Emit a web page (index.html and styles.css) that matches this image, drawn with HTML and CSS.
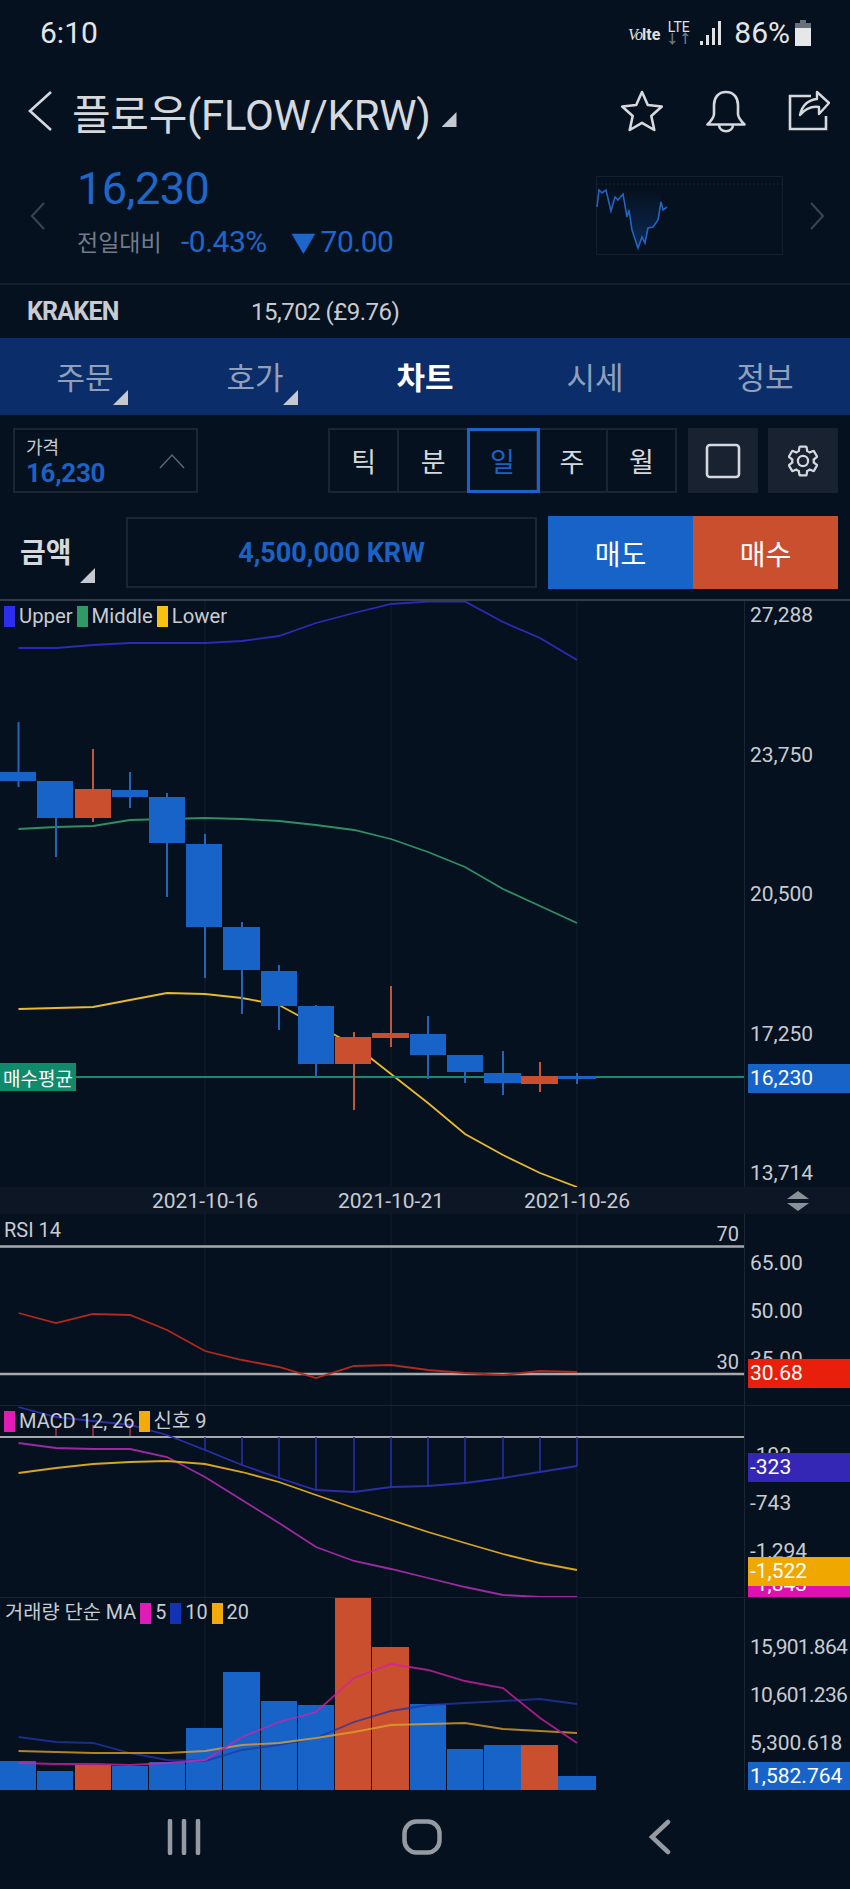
FILE: index.html
```html
<!DOCTYPE html>
<html>
<head>
  <meta charset="utf-8">
  <title>FLOW/KRW</title>
  <link rel="stylesheet" href="styles.css">
</head>
<body>
<div class="screen">

  <div class="status">
    <span class="clock">6:10</span>
    <div class="status-right">
      <span class="volte"><i>Vo</i><b>lte</b></span>
      <span class="lte"><span>LTE</span><small>↓↑</small></span>
      <svg class="signal" width="23" height="24" viewBox="0 0 23 24"><path d="M1 20h3v4H1zM7 14h3v10H7zM13 7h3v17h-3zM19 0h3v24h-3z" fill="#dfe1e4"/></svg>
      <span class="battery-text">86%</span>
      <svg width="18" height="26" viewBox="0 0 18 26"><path d="M6 0h6v3H6zM1 3h16v5H1z" fill="#6a7079"/><path d="M1 8h16v18H1z" fill="#e6e7e9"/></svg>
    </div>
  </div>

  <div class="header">
    <svg class="back" width="26" height="42" viewBox="0 0 26 42"><path d="M24 2 3 21l21 19" fill="none" stroke="#d5d8dc" stroke-width="2.6"/></svg>
    <h1 class="title">플로우(FLOW/KRW)</h1>
    <span class="corner title-corner"></span>
    <div class="header-icons">
      <svg width="44" height="44" viewBox="0 0 44 44"><path d="M22 3l5.8 13 14 1.500-10.500 9.500 3 14L22 33.800 9.700 41l3-14L2.200 17.500l14-1.500z" fill="none" stroke="#d5d8dc" stroke-width="2.600" stroke-linejoin="round"/></svg>
      <svg width="42" height="44" viewBox="0 0 42 44"><path d="M21 3C13 3 9 9 9 16v9c0 4-3 7-6.500 10.500h37C36 32 33 29 33 25v-9C33 9 29 3 21 3zM14 35.500c0 9 14 9 14 0" fill="none" stroke="#d5d8dc" stroke-width="2.600" stroke-linejoin="round"/></svg>
      <svg width="42" height="42" viewBox="0 0 42 42"><path d="M23 6H2v33h36V26" fill="none" stroke="#d5d8dc" stroke-width="2.600"/><path d="M12 25C14 16 20 10 29 9V2l12 11-10 11v-7c-7-1-14 2-19 8z" fill="none" stroke="#d5d8dc" stroke-width="2.400" stroke-linejoin="round"/></svg>
    </div>
  </div>

  <div class="quote">
    <svg class="quote-arrow" width="18" height="30" viewBox="0 0 18 30"><path d="M15 2 3 15l12 13" fill="none" stroke="#3b4552" stroke-width="2"/></svg>
    <div class="quote-main">
      <div class="price">16,230</div>
      <div class="change">
        <span class="change-label">전일대비</span>
        <span class="change-pct">-0.43%</span>
        <span class="change-val"><span class="down">▼</span>70.00</span>
      </div>
    </div>
    <svg class="mini" width="188" height="80" viewBox="596 175 188 80">
      <defs>
        <linearGradient id="miniFill" x1="0" y1="0" x2="0" y2="1">
          <stop offset="0" stop-color="#0c3066" stop-opacity="0"/>
          <stop offset="1" stop-color="#0c3066" stop-opacity="0.8"/>
        </linearGradient>
      </defs>
      <rect x="596.500" y="176.500" width="186" height="78" fill="none" stroke="#131f2d"/>
      <path d="M597 184h185" stroke="#1a2635" stroke-dasharray="2 2"/>
      <path d="M611 211 615 197 618 200 623 194 627 217 629 210 632 230 638 248 642 237 645 243 648 228 653 227 658 220 661 202 V190 H611Z" fill="url(#miniFill)"/>
      <polyline points="597,207 599,190 602,193 606,190 611,211 615,197 618,200 623,194 627,217 629,210 632,230 638,248 642,237 645,243 648,228 653,227 658,220 661,202 663,210 667,207" fill="none" stroke="#2463c0" stroke-width="1.600"/>
    </svg>
    <svg class="quote-arrow" width="18" height="30" viewBox="0 0 18 30"><path d="M3 2l12 13L3 28" fill="none" stroke="#3b4552" stroke-width="2"/></svg>
  </div>

  <div class="market">
    <span class="market-name">KRAKEN</span>
    <span class="market-price">15,702 (£9.76)</span>
  </div>

  <div class="tabs">
    <div class="tab">주문<span class="corner tab-corner"></span></div>
    <div class="tab">호가<span class="corner tab-corner"></span></div>
    <div class="tab active">차트</div>
    <div class="tab">시세</div>
    <div class="tab">정보</div>
  </div>

  <div class="toolbar">
    <div class="price-box">
      <div>
        <div class="price-box-label">가격</div>
        <div class="price-box-value">16,230</div>
      </div>
      <svg width="26" height="16" viewBox="0 0 26 16"><path d="M1 15 13 2l12 13" fill="none" stroke="#5c6470" stroke-width="1.500"/></svg>
    </div>
    <div class="periods">
      <div class="period">틱</div>
      <div class="period">분</div>
      <div class="period selected">일</div>
      <div class="period">주</div>
      <div class="period">월</div>
    </div>
    <div class="tool-btn">
      <svg width="36" height="36" viewBox="0 0 36 36"><rect x="2" y="2" width="32" height="32" rx="3" fill="none" stroke="#d5d8dc" stroke-width="2.600"/></svg>
    </div>
    <div class="tool-btn">
      <svg width="36" height="36" viewBox="0 0 24 24" fill="none" stroke="#d5d8dc" stroke-width="1.500"><path d="M19.140 12.940c.04-.3.06-.61.06-.94 0-.32-.02-.64-.07-.94l2.030-1.580c.18-.14.23-.41.12-.61l-1.920-3.320c-.12-.22-.37-.29-.59-.22l-2.390.96c-.5-.38-1.030-.7-1.620-.94l-.36-2.540c-.04-.24-.24-.41-.48-.41h-3.840c-.24 0-.43.17-.47.41l-.36 2.540c-.59.24-1.130.57-1.620.94l-2.390-.96c-.22-.08-.47 0-.59.22L2.740 8.870c-.12.21-.08.47.12.61l2.030 1.580c-.05.3-.09.63-.09.94s.02.64.07.94l-2.030 1.580c-.18.14-.23.41-.12.61l1.920 3.320c.12.22.37.29.59.22l2.390-.96c.5.38 1.030.7 1.620.94l.36 2.540c.05.24.24.41.48.41h3.840c.24 0 .44-.17.47-.41l.36-2.540c.59-.24 1.130-.56 1.620-.94l2.390.96c.22.08.47 0 .59-.22l1.920-3.320c.12-.22.07-.47-.12-.61l-2.010-1.580z"/><circle cx="12" cy="12" r="3.400"/></svg>
    </div>
  </div>

  <div class="order">
    <div class="order-label">금액<span class="corner order-corner"></span></div>
    <div class="order-input">4,500,000 KRW</div>
    <div class="order-btn sell">매도</div>
    <div class="order-btn buy">매수</div>
  </div>

  <div class="charts">

    <!-- candles + bollinger -->
    <div class="pane pane-main">
      <div class="plot">
        <svg class="plot-svg" viewBox="0 601 744 586" width="744" height="586">
          <path d="M205 601V1187M391 601V1187M577 601V1187" class="grid"/>
          <polyline class="ln" stroke="#2b2bb8" points="18.500,648 56,648 93,645 130,643 167,643 205,643 242,641 279,636 316,623 354,613 391,604 428,601.500 465,601.500 503,622 540,638 577,660"/>
          <polyline class="ln" stroke="#2f8f63" points="18.500,829 56,827 93,826 130,820 167,819 205,818 242,819 279,821 316,825 354,830 391,839 428,852 465,867 503,889 540,906 577,923"/>
          <polyline class="ln" stroke="#e6bb2e" points="18.500,1009 56,1008 93,1007 130,1000 167,993 205,994 242,998 279,1005 316,1025 354,1045 391,1074 428,1103 465,1134 503,1155 540,1173 577,1187"/>
          <path d="M0 1077H744" stroke="#178a70" stroke-width="2"/>
          <g class="up">
            <path d="M18.500 722V787M56 781V857M130 772V808M167 793V897M205 834V978M242 922V1014M279 965V1030M316 1005V1077M428 1016V1079M465 1055V1083M503 1051V1095M577 1073V1084"/>
            <rect x="0" y="772" width="36" height="9"/>
            <rect x="37" y="781" width="36" height="37"/>
            <rect x="112" y="790" width="36" height="7"/>
            <rect x="149" y="797" width="36" height="46"/>
            <rect x="186" y="844" width="36" height="83"/>
            <rect x="223" y="927" width="37" height="43"/>
            <rect x="261" y="971" width="36" height="35"/>
            <rect x="298" y="1006" width="36" height="58"/>
            <rect x="410" y="1034" width="36" height="21"/>
            <rect x="447" y="1055" width="36" height="17"/>
            <rect x="484" y="1073" width="37" height="10"/>
            <rect x="558" y="1076" width="38" height="3"/>
          </g>
          <g class="down-c">
            <path d="M93 749V822M354 1032V1110M391 986V1047M540 1062V1092"/>
            <rect x="75" y="789" width="36" height="29"/>
            <rect x="335" y="1037" width="36" height="27"/>
            <rect x="372" y="1033" width="37" height="5"/>
            <rect x="521" y="1076" width="37" height="8"/>
          </g>
        </svg>
        <div class="legend legend-main">
          <span class="swatch s-blue"></span>Upper
          <span class="swatch s-green"></span>Middle
          <span class="swatch s-yellow"></span>Lower
        </div>
        <div class="avg-tag">매수평균</div>
      </div>
      <div class="axis axis-main">
        <span>27,288</span><span>23,750</span><span>20,500</span><span>17,250</span><span>13,714</span>
        <div class="tag tag-price">16,230</div>
      </div>
    </div>

    <div class="xband">
      <div class="xlabels"><span>2021-10-16</span><span>2021-10-21</span><span>2021-10-26</span></div>
      <svg class="sort" width="22" height="20" viewBox="0 0 22 20"><path d="M11 0l11 8H0zM11 20 0 12h22z" fill="#8b919b"/></svg>
    </div>

    <!-- rsi -->
    <div class="pane pane-rsi">
      <div class="plot">
        <svg class="plot-svg" viewBox="0 1214 744 191" width="744" height="191">
          <path d="M205 1214V1405M391 1214V1405M577 1214V1405" class="grid"/>
          <path d="M0 1246.500H744M0 1374H744" stroke="#a8a8aa" stroke-width="2.500"/>
          <polyline class="ln" stroke="#b3281d" points="18.500,1313 56,1323 93,1314 130,1315 167,1330 205,1351 242,1360 279,1367 316,1378 354,1366 391,1365 428,1370 465,1373 503,1375 540,1371 577,1372"/>
        </svg>
        <div class="legend legend-rsi">RSI 14</div>
        <span class="level level-70">70</span>
        <span class="level level-30">30</span>
      </div>
      <div class="axis axis-sub">
        <span>65.00</span><span>50.00</span><span>35.00</span>
        <div class="tag tag-rsi">30.68</div>
      </div>
    </div>

    <!-- macd -->
    <div class="pane pane-macd">
      <div class="plot">
        <svg class="plot-svg" viewBox="0 1406 744 191" width="744" height="191">
          <path d="M205 1406V1597M391 1406V1597M577 1406V1597" class="grid"/>
          <path d="M56 1426V1437M93 1425V1437M130 1426V1437" stroke="#a5304f" stroke-width="1.500"/>
          <path d="M0 1437H744" stroke="#a8a8aa" stroke-width="2"/>
          <path d="M205 1437V1450M242 1437V1465M279 1437V1478M316 1437V1490M354 1437V1492M391 1437V1487M428 1437V1486M465 1437V1483M503 1437V1478M540 1437V1472M577 1437V1466" stroke="#2a2fa8" stroke-width="1.500"/>
          <polyline class="ln" stroke="#2a2fa8" points="18.500,1407 56,1417 93,1421 130,1425 167,1435 205,1450 242,1465 279,1478 316,1490 354,1492 391,1487 428,1486 465,1483 503,1478 540,1472 577,1466"/>
          <polyline class="ln" stroke="#9d2aa2" points="18.500,1443 56,1448 93,1449 130,1449 167,1457 205,1477 242,1500 279,1523 316,1547 354,1561 391,1569 428,1578 465,1587 503,1595 540,1597 577,1597"/>
          <polyline class="ln" stroke="#d8a421" points="18.500,1473 56,1468 93,1464 130,1462 167,1461 205,1464 242,1472 279,1482 316,1495 354,1508 391,1520 428,1532 465,1543 503,1554 540,1563 577,1570"/>
        </svg>
        <div class="legend legend-macd">
          <span class="swatch s-pink"></span>MACD 12, 26
          <span class="swatch s-orange"></span>신호 9
        </div>
      </div>
      <div class="axis axis-sub">
        <span>-192</span><span>-743</span><span>-1,294</span>
        <div class="tag tag-macd">-323</div>
        <div class="tag tag-ma">-1,843</div>
        <div class="tag tag-signal">-1,522</div>
      </div>
    </div>

    <!-- volume -->
    <div class="pane pane-vol">
      <div class="plot">
        <svg class="plot-svg" viewBox="0 1598 744 192" width="744" height="192">
          <path d="M205 1598V1790M391 1598V1790M577 1598V1790" class="grid"/>
          <g class="up">
            <rect x="0" y="1761" width="36" height="29"/>
            <rect x="37" y="1771" width="36" height="19"/>
            <rect x="112" y="1766" width="36" height="24"/>
            <rect x="149" y="1762" width="36" height="28"/>
            <rect x="186" y="1728" width="36" height="62"/>
            <rect x="223" y="1672" width="37" height="118"/>
            <rect x="261" y="1701" width="36" height="89"/>
            <rect x="298" y="1705" width="36" height="85"/>
            <rect x="410" y="1704" width="36" height="86"/>
            <rect x="447" y="1749" width="36" height="41"/>
            <rect x="484" y="1745" width="37" height="45"/>
            <rect x="558" y="1776" width="38" height="14"/>
          </g>
          <g class="down-c">
            <rect x="75" y="1765" width="36" height="25"/>
            <rect x="335" y="1598" width="36" height="192"/>
            <rect x="372" y="1647" width="37" height="143"/>
            <rect x="521" y="1745" width="37" height="45"/>
          </g>
          <g class="ma">
            <polyline class="ln" stroke="#2236a8" points="18.500,1737 56,1742 93,1743 130,1753 167,1760 205,1761 242,1750 279,1745 316,1738 354,1722 391,1711 428,1705 465,1703 503,1701 540,1699 577,1704"/>
            <polyline class="ln" stroke="#e0a42c" points="18.500,1751 56,1752 93,1753 130,1753 167,1753 205,1751 242,1745 279,1743 316,1738 354,1732 391,1725 428,1724 465,1723 503,1729 540,1731 577,1733"/>
            <polyline class="ln" stroke="#d61fa8" points="18.500,1763 56,1764 93,1764 130,1765 167,1763 205,1760 242,1737 279,1722 316,1712 354,1678 391,1664 428,1670 465,1681 503,1688 540,1718 577,1743"/>
          </g>
        </svg>
        <div class="legend legend-vol">
          거래량 단순 MA<span class="swatch s-pink"></span>5<span class="swatch s-navy"></span>10<span class="swatch s-orange"></span>20
        </div>
      </div>
      <div class="axis axis-sub">
        <span class="tight">15,901.864</span><span class="tight">10,601.236</span><span>5,300.618</span>
        <div class="tag tag-vol">1,582.764</div>
      </div>
    </div>
  </div>

  <div class="navbar">
    <svg width="34" height="36" viewBox="0 0 34 36"><path d="M3 2v32M17 2v32M31 2v32" stroke="#969ba3" stroke-width="4.500" stroke-linecap="round"/></svg>
    <svg width="40" height="36" viewBox="0 0 40 36"><rect x="2.500" y="2.500" width="35" height="31" rx="12" fill="none" stroke="#969ba3" stroke-width="4.500"/></svg>
    <svg width="24" height="36" viewBox="0 0 24 36"><path d="M20 3 4 18l16 15" fill="none" stroke="#969ba3" stroke-width="4.500" stroke-linecap="round"/></svg>
  </div>

</div>
</body>
</html>
```

FILE: styles.css
```css
* {
  box-sizing: border-box;
}

body {
  margin: 0;
  background: #06111f;
  color: #d5d8dc;
  font-family: Roboto, "Noto Sans CJK KR", sans-serif;
}

.screen {
  width: 850px;
  height: 1889px;
  overflow: hidden;
}

.corner {
  display: block;
  width: 15px;
  height: 15px;
  background: #c3c8d1;
  clip-path: polygon(100% 0, 100% 100%, 0 100%);
}

/* status bar */
.status {
  height: 65px;
  display: flex;
  align-items: center;
  justify-content: space-between;
  padding: 0 38px 0 40px;
}

.clock {
  font-size: 30px;
  color: #e3e5e8;
}

.status-right {
  display: flex;
  align-items: center;
}

.volte {
  font-size: 16px;
  margin-right: 6px;
  margin-top: 3px;
  color: #dfe1e4;
}

.volte i {
  font-family: "Liberation Serif", serif;
  font-weight: 400;
  letter-spacing: -1px;
}

.volte b {
  font-size: 16px;
}

.lte {
  display: flex;
  flex-direction: column;
  align-items: center;
  font-size: 14px;
  line-height: 12px;
  width: 25px;
  margin-right: 8px;
  color: #dfe1e4;
}

.lte small {
  font-size: 13px;
  line-height: 12px;
  color: #757b84;
  font-weight: 700;
}

.signal {
  margin-right: 12px;
}

.battery-text {
  font-size: 30px;
  color: #e3e5e8;
  margin-right: 4px;
}

/* title row */
.header {
  height: 92px;
  display: flex;
  align-items: center;
  padding: 0 20px 0 27px;
}

.back {
  margin-right: 19px;
}

.title {
  margin: 0;
  font-size: 42px;
  font-weight: 400;
  color: #d5d8dc;
  letter-spacing: -0.3px;
}

.title-corner {
  margin: 17px 0 0 11px;
}

.header-icons {
  margin-left: auto;
  display: flex;
  align-items: center;
  gap: 41px;
}

/* price block */
.quote {
  height: 128px;
  display: flex;
  align-items: center;
  border-bottom: 2px solid #141e2c;
  padding: 0 24px 0 29px;
}

.quote-arrow {
  flex: none;
  margin-bottom: 8px;
}

.quote-main {
  flex: 1;
  margin-left: 30px;
  padding-bottom: 17px;
}

.price {
  font-size: 45px;
  line-height: 50px;
  color: #1f66c9;
  letter-spacing: -0.5px;
}

.change {
  display: flex;
  align-items: center;
  height: 36px;
  margin-top: 9px;
  font-size: 30px;
  letter-spacing: -0.5px;
  color: #1f66c9;
}

.change-label {
  font-size: 23px;
  color: #737c88;
  width: 104px;
  letter-spacing: 0;
}

.change-pct {
  width: 110px;
}

.down {
  font-size: 25px;
  margin-right: 5px;
}

.mini {
  flex: none;
  margin: 0 24px 10px 0;
}

.market {
  height: 53px;
  display: flex;
  align-items: center;
  padding-left: 27px;
}

.market-name {
  width: 224px;
  font-size: 25px;
  font-weight: 700;
  letter-spacing: -0.8px;
  color: #c8ccd2;
}

.market-price {
  font-size: 24px;
  letter-spacing: -0.5px;
  color: #c8ccd2;
}

/* tabs */
.tabs {
  height: 77px;
  display: flex;
  background: #0b2d69;
}

.tab {
  flex: 1;
  position: relative;
  display: flex;
  align-items: center;
  justify-content: center;
  padding-bottom: 3px;
  font-size: 31px;
  color: #8fa0bb;
}

.tab.active {
  color: #fff;
  font-weight: 700;
}

.tab-corner {
  position: absolute;
  left: 113px;
  top: 52px;
}

/* period toolbar */
.toolbar {
  display: flex;
  align-items: stretch;
  height: 65px;
  margin: 13px 12px 0 13px;
}

.price-box {
  width: 185px;
  display: flex;
  align-items: center;
  justify-content: space-between;
  padding: 0 11px 0 11px;
  border: 2px solid #1b2533;
  margin-right: 130px;
}

.price-box-label {
  font-size: 18px;
  line-height: 24px;
  color: #c8ccd2;
}

.price-box-value {
  font-size: 26px;
  line-height: 26px;
  font-weight: 700;
  color: #1c62c4;
  letter-spacing: -0.3px;
}

.periods {
  width: 349px;
  display: flex;
  border: 2px solid #1b2533;
  margin-right: 11px;
}

.period {
  flex: 1;
  display: flex;
  align-items: center;
  justify-content: center;
  font-size: 27px;
  color: #d5d8dc;
  border-right: 2px solid #1b2533;
}

.period:last-child {
  border-right: 0;
}

.period.selected {
  color: #1c62c4;
  outline: 3px solid #1a63c9;
  outline-offset: -1px;
  z-index: 1;
}

.tool-btn {
  width: 70px;
  margin-right: 10px;
  display: flex;
  align-items: center;
  justify-content: center;
  background: #182230;
}

.tool-btn:last-child {
  margin-right: 0;
}

/* order row */
.order {
  display: flex;
  align-items: stretch;
  height: 73px;
  margin: 23px 12px 0 20px;
}

.order-label {
  position: relative;
  width: 106px;
  display: flex;
  align-items: center;
  font-size: 28px;
  font-weight: 700;
  color: #d5d8dc;
  padding-bottom: 4px;
}

.order-corner {
  position: absolute;
  left: 60px;
  top: 52px;
}

.order-input {
  width: 411px;
  margin: 1px 11px 1px 0;
  display: flex;
  align-items: center;
  justify-content: center;
  border: 2px solid #1b2533;
  font-size: 27px;
  font-weight: 700;
  color: #1c62c4;
}

.order-btn {
  flex: 1;
  display: flex;
  align-items: center;
  justify-content: center;
  font-size: 28px;
  color: #fff;
}

.sell {
  background: #1763c8;
}

.buy {
  background: #c94f2f;
}

/* charts */
.charts {
  margin-top: 10px;
  border-top: 2px solid #343d4b;
}

.pane {
  display: flex;
}

.pane-main {
  height: 586px;
}

.pane-rsi {
  height: 191px;
}

.pane-macd {
  height: 192px;
  border-top: 1px solid #182232;
}

.pane-vol {
  height: 193px;
  border-top: 1px solid #182232;
}

.plot {
  position: relative;
  width: 744px;
  flex: none;
  overflow: hidden;
}

.plot-svg {
  display: block;
}

.grid {
  stroke: #0f1a29;
  stroke-width: 1.500;
}

.ln {
  fill: none;
  stroke-width: 1.800;
}

.ma {
  opacity: 0.78;
}

.up {
  fill: #1763c8;
}

.up path {
  stroke-width: 2;
  stroke: #2565b8;
}

.down-c {
  fill: #c94f2f;
}

.down-c path {
  stroke-width: 2;
  stroke: #c0573b;
}

.legend {
  position: absolute;
  display: flex;
  align-items: center;
  gap: 4px;
  font-size: 20px;
  line-height: 22px;
  color: #c8ccd2;
  white-space: nowrap;
}

.legend-main {
  top: 4px;
  left: 4px;
  font-size: 20.300px;
}

.legend-rsi {
  top: 5px;
  left: 4px;
}

.legend-macd {
  top: 4px;
  left: 4px;
}

.legend-vol {
  top: 4px;
  left: 5px;
  font-size: 19.800px;
}

.swatch {
  width: 11px;
  height: 21px;
}

.s-blue {
  background: #2d2df0;
}

.s-green {
  background: #2f9a68;
}

.s-yellow {
  background: #f5c211;
}

.s-pink {
  background: #e11bb5;
}

.s-orange {
  background: #f2ab0a;
}

.s-navy {
  background: #1233b4;
}

.avg-tag {
  position: absolute;
  left: 0;
  top: 462px;
  width: 76px;
  height: 28px;
  display: flex;
  align-items: center;
  justify-content: center;
  background: #0f8a6a;
  font-size: 19px;
  color: #fff;
  white-space: nowrap;
}

.level {
  position: absolute;
  right: 5px;
  font-size: 20px;
  line-height: 24px;
  color: #c8ccd2;
}

.level-70 {
  top: 8px;
}

.level-30 {
  top: 136px;
}

.axis {
  position: relative;
  flex: 1;
  display: flex;
  flex-direction: column;
  border-left: 1px solid #1a2433;
  padding-left: 5px;
  font-size: 21px;
  color: #c8ccd2;
  overflow: hidden;
}

.axis span {
  line-height: 28px;
}

.axis .tight {
  letter-spacing: -0.7px;
}

.axis-main {
  gap: 111.500px;
}

.axis-sub {
  padding-top: 35px;
  gap: 20px;
}

.tag {
  position: absolute;
  left: 3px;
  right: 0;
  height: 29px;
  padding-left: 2px;
  line-height: 29px;
  color: #fff;
}

.tag-price {
  top: 463px;
  background: #1763c8;
}

.tag-rsi {
  top: 145px;
  background: #e81f0a;
}

.tag-macd {
  top: 47px;
  background: #3527b5;
}

.tag-signal {
  top: 151px;
  background: #f0a800;
}

.tag-ma {
  top: 164px;
  background: #e010b0;
}

.tag-vol {
  top: 164px;
  background: #1763c8;
}

.xband {
  height: 27px;
  display: flex;
  background: #0d1625;
}

.xlabels {
  width: 744px;
  flex: none;
  display: flex;
  padding-left: 112px;
  font-size: 21px;
  line-height: 28px;
  color: #c8ccd2;
}

.xlabels span {
  width: 186px;
  text-align: center;
}

.sort {
  margin: 4px 0 0 43px;
}

/* android buttons */
.navbar {
  height: 99px;
  display: grid;
  grid-template-columns: repeat(3, 238px);
  justify-items: center;
  align-items: center;
  padding: 0 0 5px 65px;
}
```
